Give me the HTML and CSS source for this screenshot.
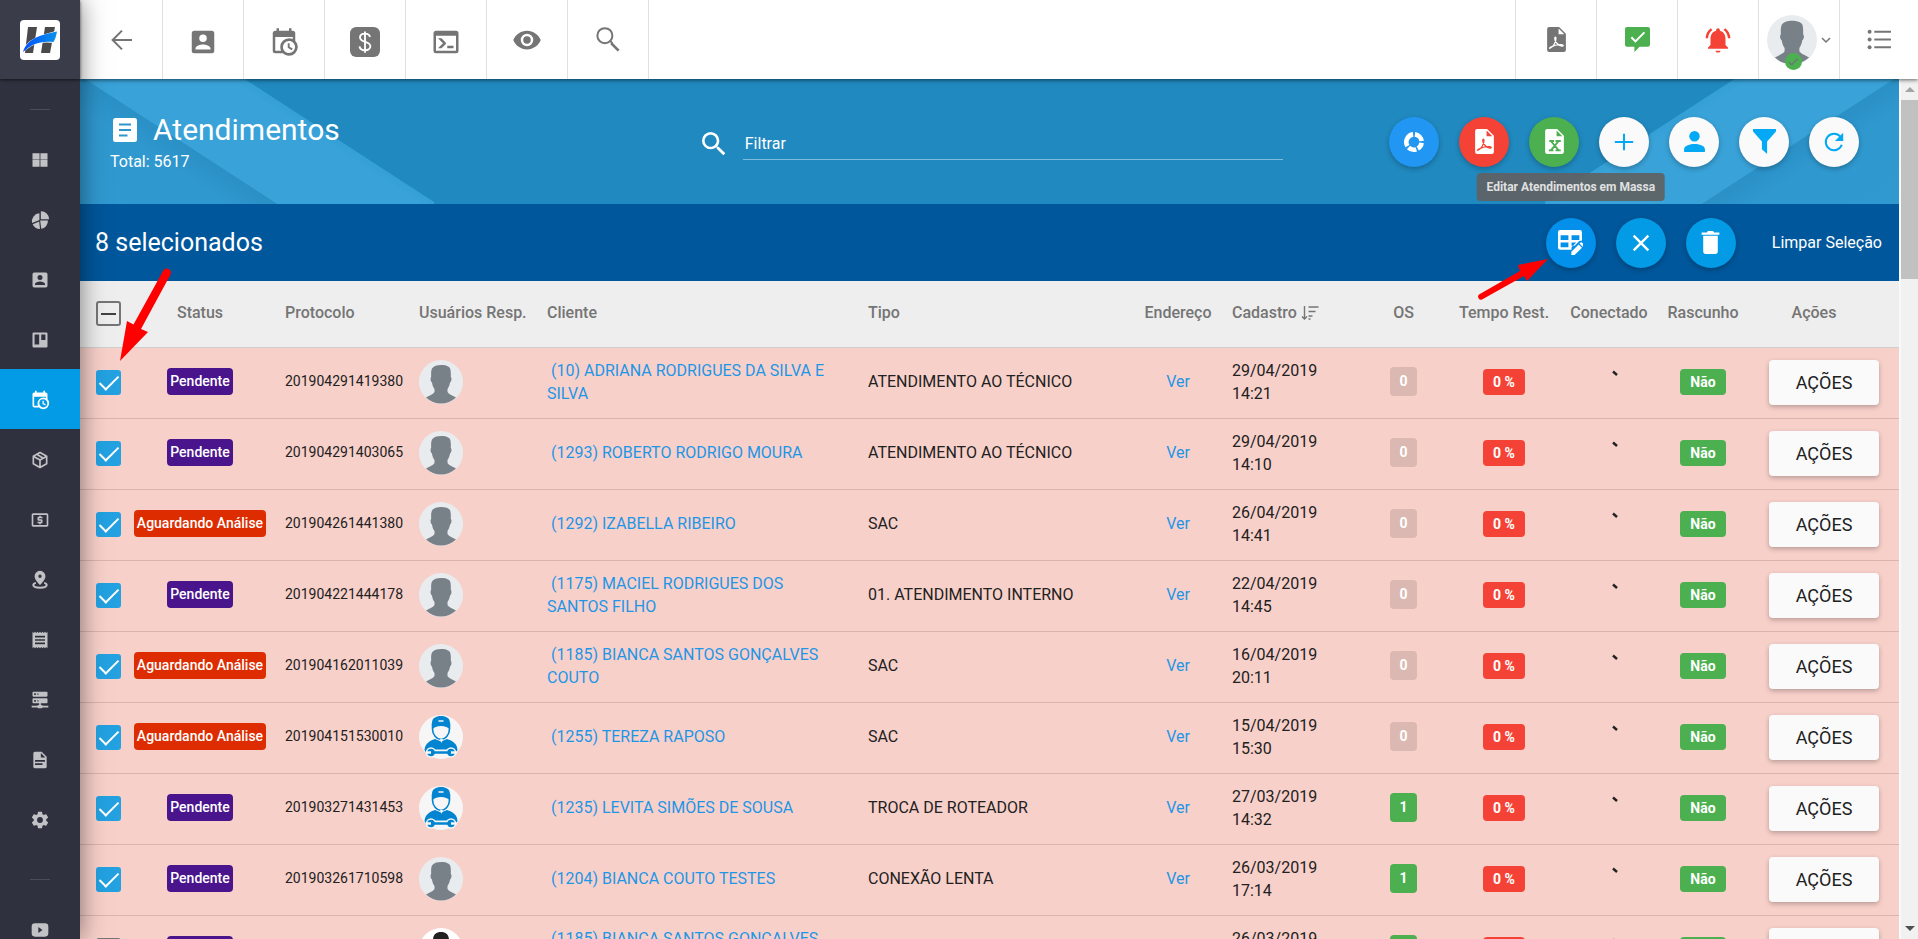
FILE: index.html
```html
<!DOCTYPE html>
<html lang="pt-BR">
<head>
    <meta charset="UTF-8">
    <meta name="viewport" content="width=device-width, initial-scale=1.0">
    <title>Atendimentos</title>
    <link rel="stylesheet" href="styles.css">
</head>
<body>
    <!-- Icon sprite -->
    <svg class="sprite" aria-hidden="true">
        <symbol id="i-arrow-left" viewBox="0 0 24 24"><path d="M20 12H4.800M12 4.500 4.500 12l7.500 7.500" fill="none" stroke="currentColor" stroke-width="1.600"/></symbol>
        <symbol id="i-account-box" viewBox="0 0 24 24"><path d="M3 5v14a2 2 0 0 0 2 2h14a2 2 0 0 0 2-2V5a2 2 0 0 0-2-2H5a2 2 0 0 0-2 2m12 4a3 3 0 0 1-3 3 3 3 0 0 1-3-3 3 3 0 0 1 3-3 3 3 0 0 1 3 3m-9 8c0-2 4-3.100 6-3.100s6 1.100 6 3.100v1H6v-1z"/></symbol>
        <symbol id="i-calendar-clock" viewBox="0 0 24 24"><path d="M15 13h1.500v2.820l2.440 1.410-.75 1.300L15 16.690V13m4-5H5v11h4.670c-.43-.91-.67-1.930-.67-3a7 7 0 0 1 7-7c1.070 0 2.090.24 3 .67V8M5 21a2 2 0 0 1-2-2V5c0-1.110.89-2 2-2h1V1h2v2h8V1h2v2h1a2 2 0 0 1 2 2v6.100c1.240 1.260 2 2.990 2 4.900a7 7 0 0 1-7 7c-1.910 0-3.640-.76-4.900-2H5m11-9.850A4.850 4.850 0 0 0 11.150 16c0 2.680 2.170 4.850 4.850 4.850A4.850 4.850 0 0 0 20.850 16c0-2.680-2.170-4.850-4.850-4.850z"/></symbol>
        <symbol id="i-dollar-box" viewBox="0 0 24 24"><rect width="24" height="24" rx="5"/><path d="M16 8c-.4-1.800-2-2.700-4-2.700-2.300 0-4 1.200-4 3.100 0 4.400 8.300 2.600 8.300 7 0 2-1.900 3.200-4.200 3.200-2.400 0-4.200-1.100-4.500-3.100M12 3.500v17" fill="none" stroke="#fff" stroke-width="1.500"/></symbol>
        <symbol id="i-console" viewBox="0 0 24 24"><path d="M20 19V7H4v12h16m0-16a2 2 0 0 1 2 2v14a2 2 0 0 1-2 2H4a2 2 0 0 1-2-2V5c0-1.110.9-2 2-2h16m-7 14v-2h5v2h-5m-3.420-4L5.570 9H8.400l3.300 3.300c.39.39.39 1.030 0 1.420L8.420 17H5.590l3.990-4z"/></symbol>
        <symbol id="i-eye" viewBox="0 0 24 24"><path d="M12 9a3 3 0 0 0-3 3 3 3 0 0 0 3 3 3 3 0 0 0 3-3 3 3 0 0 0-3-3m0 8a5 5 0 0 1-5-5 5 5 0 0 1 5-5 5 5 0 0 1 5 5 5 5 0 0 1-5 5m0-12.500C7 4.500 2.730 7.610 1 12c1.730 4.390 6 7.500 11 7.500s9.270-3.110 11-7.500c-1.730-4.390-6-7.500-11-7.500z"/></symbol>
        <symbol id="i-search-thin" viewBox="0 0 24 24"><path d="M14.500 14.500l6 6" fill="none" stroke="currentColor" stroke-width="2.200"/><circle cx="9.500" cy="8.500" r="6" fill="none" stroke="currentColor" stroke-width="1.600"/><path d="M13.500 12.500l2 2" stroke="currentColor" stroke-width="1.600"/></symbol>
        <symbol id="i-search" viewBox="0 0 24 24"><path d="M9.500 3A6.500 6.500 0 0 1 16 9.500c0 1.610-.59 3.090-1.560 4.230l.27.27h.79l5 5-1.500 1.500-5-5v-.79l-.27-.27A6.516 6.516 0 0 1 9.500 16 6.500 6.500 0 0 1 3 9.500 6.500 6.500 0 0 1 9.500 3m0 2C7 5 5 7 5 9.500S7 14 9.500 14 14 12 14 9.500 12 5 9.500 5z"/></symbol>
        <symbol id="i-pdf" viewBox="0 0 24 24"><path fill-rule="evenodd" d="M5 0h9.500L21 6.500V22a2 2 0 0 1-2 2H5a2 2 0 0 1-2-2V2a2 2 0 0 1 2-2M14 1.500V7h5.500z"/><path d="M5.500 20.500c3.500-1 6-6.500 6-9.500 0-1.800-1.200-1.800-1.200 0 0 3.500 3.700 6.800 7 7.300 1.700.2 1.500-1.300-.3-1.400-3.500-.2-7.500.6-10.500 2.400-1 .7-1.500 1.200-1 1.200z" fill="none" stroke="var(--cut, #fff)" stroke-width="1.200"/></symbol>
        <symbol id="i-excel" viewBox="0 0 24 24"><path fill-rule="evenodd" d="M5 0h9.500L21 6.500V22a2 2 0 0 1-2 2H5a2 2 0 0 1-2-2V2a2 2 0 0 1 2-2M14 1.500V7h5.500z"/><path d="M7 11.500h4.500M13 11.500h5M6.500 20.500h4.500M13 20.500h5M8.500 11.500l7.500 9M16 11.500l-7.500 9" fill="none" stroke="var(--cut)" stroke-width="1.800"/></symbol>
        <symbol id="i-msg-check" viewBox="0 0 24 24"><path fill-rule="evenodd" d="M2 0h20a2 2 0 0 1 2 2v15a2 2 0 0 1-2 2h-8l-5 5v-5H2a2 2 0 0 1-2-2V2a2 2 0 0 1 2-2M19.300 5.800l-1.300-1.300-8 8L6.800 9.200 5.400 10.600 10 15z"/></symbol>
        <symbol id="i-bell" viewBox="0 0 24 24"><path d="M7.580 4.080L6.150 2.650C3.750 4.480 2.170 7.300 2.030 10.500h2c.15-2.650 1.510-4.970 3.550-6.420zm12.390 6.420h2c-.15-3.200-1.730-6.020-4.120-7.850l-1.420 1.430c2.020 1.450 3.390 3.770 3.540 6.420zM18 11c0-3.070-1.640-5.640-4.500-6.320V4c0-.83-.67-1.500-1.500-1.500s-1.500.67-1.500 1.500v.68C7.630 5.360 6 7.920 6 11v5l-2 2v1h16v-1l-2-2v-5zM10 20.500c0 1.100.9 1.500 2 1.500s2-.4 2-1.500z"/></symbol>
        <symbol id="i-list" viewBox="0 0 24 24"><path d="M7 4.500h16M7 12h16M7 19.500h16" stroke="currentColor" stroke-width="2"/><circle cx="2.500" cy="4.500" r="1.900"/><circle cx="2.500" cy="12" r="1.900"/><circle cx="2.500" cy="19.500" r="1.900"/></symbol>
        <symbol id="i-chevron" viewBox="0 0 10 10"><path d="M1 3l4 4 4-4" fill="none" stroke="currentColor" stroke-width="1.500"/></symbol>

        <symbol id="i-dashboard" viewBox="0 0 24 24"><path d="M3 4h8.500v7H3zM12.500 4H21v7h-8.500zM3 12h8.500v8H3zM12.500 12H21v8h-8.500z"/><path d="M3 11h8.500v1H3zM12.500 11H21v1h-8.500z" opacity=".6"/></symbol>
        <symbol id="i-pie" viewBox="0 0 24 24"><path d="M13 1.500A9.500 9.500 0 0 1 23 11H13zM11.300 4v8L2.500 15.500A9.500 9.500 0 0 1 11.300 4zM3.200 17l7.800-3.300 1 9A9.500 9.500 0 0 1 3.200 17zM13.500 22.500l-1.300-10H21.500a9.500 9.500 0 0 1-8 10z"/></symbol>
        <symbol id="i-board" viewBox="0 0 24 24"><path fill-rule="evenodd" d="M4.500 3h15A1.500 1.500 0 0 1 21 4.500v15a1.500 1.500 0 0 1-1.500 1.500h-15A1.500 1.500 0 0 1 3 19.500v-15A1.500 1.500 0 0 1 4.500 3M5.500 5.500v12H11v-12zM13.500 5.500V12h5V5.500z"/></symbol>
        <symbol id="i-package" viewBox="0 0 24 24"><path d="M21 16.500c0 .38-.21.71-.53.88l-7.900 4.440c-.16.12-.36.18-.57.18s-.41-.06-.57-.18l-7.900-4.440A.991.991 0 0 1 3 16.500v-9c0-.38.21-.71.53-.88l7.900-4.440c.16-.12.36-.18.57-.18s.41.06.57.18l7.900 4.440c.32.17.53.5.53.88v9M12 4.150l-1.890 1.070L16 8.610 17.960 7.500 12 4.150M6.040 7.500L12 10.850l1.960-1.100-5.880-3.400L6.040 7.500M5 15.910l6 3.380v-6.710L5 9.210v6.700m14 0v-6.700l-6 3.370v6.710l6-3.380z"/></symbol>
        <symbol id="i-cash" viewBox="0 0 24 24"><path d="M11 17h2v-1h1c.55 0 1-.45 1-1v-3c0-.55-.45-1-1-1h-3v-1h4V8h-2V7h-2v1h-1c-.55 0-1 .45-1 1v3c0 .55.45 1 1 1h3v1H9v2h2v1zm9-13H4c-1.110 0-2 .89-2 2v12c0 1.110.89 2 2 2h16c1.110 0 2-.89 2-2V6c0-1.110-.89-2-2-2zm0 14H4V6h16v12z"/></symbol>
        <symbol id="i-pin" viewBox="0 0 24 24"><path d="M12 1a6.500 6.500 0 0 1 6.500 6.500C18.500 12 12 18 12 18S5.500 12 5.500 7.500A6.500 6.500 0 0 1 12 1m0 4.500a2 2 0 1 0 0 4 2 2 0 0 0 0-4z"/><path d="M7 15.500c-2 .6-3 1.500-3 2.500 0 2 3.600 3.200 8 3.200s8-1.200 8-3.200c0-1-1-1.900-3-2.500" fill="none" stroke="currentColor" stroke-width="2.400"/></symbol>
        <symbol id="i-receipt" viewBox="0 0 24 24"><path d="M18 17H6v-2h12v2zm0-4H6v-2h12v2zm0-4H6V7h12v2zM3 22l1.500-1.500L6 22l1.500-1.500L9 22l1.500-1.500L12 22l1.500-1.500L15 22l1.500-1.500L18 22l1.500-1.500L21 22V2l-1.500 1.500L18 2l-1.500 1.500L15 2l-1.500 1.500L12 2l-1.500 1.500L9 2 7.500 3.500 6 2 4.500 3.500 3 2v20z"/></symbol>
        <symbol id="i-server" viewBox="0 0 24 24"><path d="M13 18h1a1 1 0 0 1 1 1h7v2h-7a1 1 0 0 1-1 1h-4a1 1 0 0 1-1-1H2v-2h7a1 1 0 0 1 1-1h1v-2H4a1 1 0 0 1-1-1v-4a1 1 0 0 1 1-1h16a1 1 0 0 1 1 1v4a1 1 0 0 1-1 1h-7v2M4 2h16a1 1 0 0 1 1 1v4a1 1 0 0 1-1 1H4a1 1 0 0 1-1-1V3a1 1 0 0 1 1-1m5 4h1V4H9v2m0 8h1v-2H9v2M5 4v2h2V4H5m0 8v2h2v-2H5z"/></symbol>
        <symbol id="i-file" viewBox="0 0 24 24"><path d="M13 9h5.500L13 3.500V9M6 2h8l6 6v12a2 2 0 0 1-2 2H6a2 2 0 0 1-2-2V4c0-1.110.89-2 2-2m9 16v-2H6v2h9m3-4v-2H6v2h12z"/></symbol>
        <symbol id="i-gear" viewBox="0 0 24 24"><path d="M12 15.500A3.500 3.500 0 0 1 8.500 12 3.500 3.500 0 0 1 12 8.500a3.500 3.500 0 0 1 3.500 3.500 3.500 3.500 0 0 1-3.500 3.500m7.430-2.530c.04-.32.07-.64.07-.97s-.03-.66-.07-1l2.110-1.630c.19-.15.24-.42.12-.64l-2-3.460c-.12-.22-.39-.31-.61-.22l-2.490 1c-.52-.39-1.060-.73-1.690-.98l-.37-2.650A.506.506 0 0 0 14 2h-4c-.25 0-.46.18-.5.42l-.37 2.650c-.63.25-1.170.59-1.690.98l-2.490-1c-.22-.09-.49 0-.61.22l-2 3.460c-.13.22-.07.49.12.64L4.570 11c-.04.34-.07.67-.07 1s.03.65.07.97l-2.110 1.660c-.19.15-.25.42-.12.64l2 3.460c.12.22.39.3.61.22l2.490-1.010c.52.4 1.060.74 1.690.99l.37 2.650c.04.24.25.42.5.42h4c.25 0 .46-.18.5-.42l.37-2.650c.63-.26 1.170-.59 1.690-.99l2.490 1.010c.22.08.49 0 .61-.22l2-3.460c.12-.22.07-.49-.12-.64l-2.110-1.660z"/></symbol>
        <symbol id="i-video" viewBox="0 0 24 24"><path fill-rule="evenodd" d="M6 4h12a4 4 0 0 1 4 4v8a4 4 0 0 1-4 4H6a4 4 0 0 1-4-4V8a4 4 0 0 1 4-4M10 8.500v7l5-3.500z"/></symbol>

        <symbol id="i-article" viewBox="0 0 24 24"><path fill-rule="evenodd" d="M2.500 0h19A2.500 2.500 0 0 1 24 2.500v19a2.500 2.500 0 0 1-2.500 2.500h-19A2.500 2.500 0 0 1 0 21.500v-19A2.500 2.500 0 0 1 2.500 0M6 5.500v2h12v-2zM6 11v2h12v-2zM6 16.500v2h8.500v-2z"/></symbol>
        <symbol id="i-donut" viewBox="0 0 24 24"><g fill="none" stroke="currentColor" stroke-width="5"><path d="M13 3.700a8.400 8.400 0 0 1 7.300 7.300"/><path d="M20.300 13a8.400 8.400 0 0 1-4.200 6.200"/><path d="M14.500 20a8.400 8.400 0 0 1-8.500-2"/><path d="M4.900 16.500A8.400 8.400 0 0 1 11 3.700"/></g></symbol>
        <symbol id="i-plus" viewBox="0 0 24 24"><path d="M12 3v18M2 12h20" stroke="currentColor" stroke-width="2.200"/></symbol>
        <symbol id="i-person" viewBox="0 0 24 24"><circle cx="12" cy="7" r="5"/><path d="M2 22v-2.500C2 16 8 14.500 12 14.500s10 1.500 10 5V22z"/></symbol>
        <symbol id="i-funnel" viewBox="0 0 24 24"><path d="M1 0h22v2.500L14.500 12v12L9.500 19.500V12L1 2.500z"/></symbol>
        <symbol id="i-refresh" viewBox="0 0 24 24"><path d="M20.500 15A9 9 0 1 1 19 6.200" fill="none" stroke="currentColor" stroke-width="2.200"/><path d="M22 2v9h-9z"/></symbol>
        <symbol id="i-table-edit" viewBox="0 0 24 24"><path fill-rule="evenodd" d="M2 0h19a2 2 0 0 1 2 2v8l-2.500.5L16 15h-3v4H2a2 2 0 0 1-2-2V2a2 2 0 0 1 2-2M2.500 5v4.500H10V5zM13 5v4.500h7.500V5zM2.500 12v4.500H10V12zM13 12v4.500l4.500-4.500z"/><path d="M12.800 24v-3.200l7-7 3.200 3.200-7 7zM20.600 13l1-1q.7-.6 1.400 0l1.800 1.800-1.200 2.200z"/></symbol>
        <symbol id="i-close" viewBox="0 0 24 24"><path d="M4 4l16 16M20 4L4 20" stroke="currentColor" stroke-width="2.600"/></symbol>
        <symbol id="i-trash" viewBox="0 0 24 24"><path d="M20.500 2.500h-5L14.500 1h-5l-1 1.500h-5v2h17M5 20.500A2.500 2.500 0 0 0 7.500 23h9a2.500 2.500 0 0 0 2.500-2.500V5.500H5z"/></symbol>
        <symbol id="i-sort" viewBox="0 0 18 16"><path d="M3.500 1v13M1 11.500l2.500 2.500L6 11.500M7.500 2h10M7.500 6.500h7M7.500 11h4M7.500 14h2" fill="none" stroke="currentColor" stroke-width="1.400"/></symbol>
        <symbol id="i-mark" viewBox="0 0 24 24"><path d="M16 1.500l4 3.500" stroke="currentColor" stroke-width="2.400"/></symbol>

        <symbol id="av-user" viewBox="0 0 44 44"><circle cx="22" cy="22" r="22" fill="#e9ecef"/><path d="M22 5c6 0 9.500 2 9.500 5 .5 3 .3 5 .3 7 1.200 1 .7 4.500-.8 5.500-.3 3-1.500 5-2.500 6.500v3c1.500 2.500 5.500 3.500 8.500 5.500a22 22 0 0 1-30 0c3-2 7-3 8.500-5.500v-3c-1.200-1.500-2.200-3.500-2.500-6.500-1.500-1-2-4.500-.8-5.500-.1-3-.3-6 .8-8.500C14.500 6 18 5 22 5z" fill="#788088"/></symbol>
        <symbol id="av-tech" viewBox="0 0 44 44"><circle cx="22" cy="22" r="22" fill="#f6f6f6"/><path d="M5.500 35c1-7 5-9 10.500-11l6 2.500 6-2.500c5.500 2 10 4 10.500 11l-3 5h-27z" fill="#0284d0"/><path d="M13.500 14c0 6 4.500 10.500 8.500 10.500s8.500-4.500 8.500-10.500V9h-17z" fill="#f6f6f6" stroke="#0284d0" stroke-width="1.600"/><path d="M13 15V8c0-5 4-7 9-7s9 2 9 7v7c-2-3-5-4-9-4s-7 1-9 4z" fill="#0284d0"/><path d="M19.500 6h5" stroke="#f6f6f6" stroke-width="1.500"/><path d="M21 24l1.500 4 1.500-4z" fill="#f6f6f6"/><path d="M14 37.500h16" stroke="#f6f6f6" stroke-width="6"/><circle cx="12" cy="37.500" r="4.500" fill="#0284d0" stroke="#f6f6f6" stroke-width="1.500"/><circle cx="32" cy="37.500" r="4.500" fill="#0284d0" stroke="#f6f6f6" stroke-width="1.500"/><path d="M14 37.500h16" stroke="#0284d0" stroke-width="2.500"/><path d="M7 37.500h5M32 37.500h6" stroke="#f6f6f6" stroke-width="2.500"/></symbol>
        <symbol id="av-dark" viewBox="0 0 44 44"><circle cx="22" cy="22" r="22" fill="#fff"/><path d="M22 4c5 0 8 3 8 8 0 8-3 12-8 12s-8-4-8-12c0-5 3-8 8-8zM6 40c2-10 8-12 16-12s14 2 16 12z"/></symbol>
    </svg>

    <aside class="sidebar">
        <a class="logo" href="#" aria-label="Início">
            <svg viewBox="0 0 40 40">
                <rect width="40" height="40" rx="4" fill="#fff"/>
                <path d="M8 7h9l-4 26H5zM25 7h10l-5 26h-9z" fill="#4a4a4c"/>
                <path d="M2 33c4-13 14-17 36-22.500-1 6-2 9-4 12.500-13-2-22 1-32 10z" fill="#fff"/>
                <path d="M3 32C7 20 17 15.500 37 11.500c-.7 4-1.500 7-3.500 10.500C20 20.500 12 24 3 32z" fill="url(#swoosh)"/>
                <defs><linearGradient id="swoosh"><stop offset="0" stop-color="#0050ff"/><stop offset="1" stop-color="#0a92e8"/></linearGradient></defs>
            </svg>
        </a>
        <nav class="side-nav" aria-label="Menu principal">
            <hr>
            <a href="#" aria-label="Painel"><svg><use href="#i-dashboard"/></svg></a>
            <a href="#" aria-label="Relatórios"><svg><use href="#i-pie"/></svg></a>
            <a href="#" aria-label="Clientes"><svg><use href="#i-account-box"/></svg></a>
            <a href="#" aria-label="Quadros"><svg><use href="#i-board"/></svg></a>
            <a href="#" class="active" aria-label="Atendimentos"><svg><use href="#i-calendar-clock"/></svg></a>
            <a href="#" aria-label="Estoque"><svg><use href="#i-package"/></svg></a>
            <a href="#" aria-label="Financeiro"><svg><use href="#i-cash"/></svg></a>
            <a href="#" aria-label="Mapa"><svg><use href="#i-pin"/></svg></a>
            <a href="#" aria-label="Notas"><svg><use href="#i-receipt"/></svg></a>
            <a href="#" aria-label="Rede"><svg><use href="#i-server"/></svg></a>
            <a href="#" aria-label="Documentos"><svg><use href="#i-file"/></svg></a>
            <a href="#" aria-label="Configurações"><svg><use href="#i-gear"/></svg></a>
            <hr>
            <a href="#" aria-label="Vídeos"><svg><use href="#i-video"/></svg></a>
        </nav>
    </aside>

    <div class="page">
        <header class="topbar">
            <div class="top-group left">
                <button aria-label="Voltar"><svg><use href="#i-arrow-left"/></svg></button>
                <button class="low" aria-label="Clientes"><svg><use href="#i-account-box"/></svg></button>
                <button class="low" aria-label="Agenda"><svg><use href="#i-calendar-clock"/></svg></button>
                <button class="low" aria-label="Financeiro"><svg><use href="#i-dollar-box"/></svg></button>
                <button class="low" aria-label="Terminal"><svg><use href="#i-console"/></svg></button>
                <button aria-label="Visualizar"><svg><use href="#i-eye"/></svg></button>
                <button aria-label="Pesquisar"><svg><use href="#i-search-thin"/></svg></button>
            </div>
            <div class="top-group right">
                <button aria-label="PDF"><svg class="small"><use href="#i-pdf"/></svg></button>
                <button class="green" aria-label="Mensagens"><svg class="small"><use href="#i-msg-check"/></svg></button>
                <button class="red" aria-label="Notificações"><svg><use href="#i-bell"/></svg></button>
                <button class="profile" aria-label="Perfil">
                    <span class="profile-pic">
                        <svg class="avatar-lg"><use href="#av-user"/></svg>
                        <svg class="online" viewBox="0 0 18 18"><circle cx="9" cy="9" r="9" fill="#4caf50"/><path d="M4 9.500l3 3L13.500 6" fill="none" stroke="#6b7a72" stroke-width="1.600"/></svg>
                    </span>
                    <svg class="chevron"><use href="#i-chevron"/></svg>
                </button>
                <button aria-label="Menu"><svg class="small"><use href="#i-list"/></svg></button>
            </div>
        </header>

        <div class="content">
            <main>
                <section class="page-head">
                    <div class="title">
                        <h1><svg><use href="#i-article"/></svg>Atendimentos</h1>
                        <p>Total: 5617</p>
                    </div>
                    <label class="search">
                        <svg><use href="#i-search"/></svg>
                        <input type="text" placeholder="Filtrar" aria-label="Filtrar">
                    </label>
                    <div class="actions">
                        <button class="fab blue" aria-label="Gráficos"><svg class="s-md"><use href="#i-donut"/></svg></button>
                        <button class="fab red" aria-label="Exportar PDF"><svg><use href="#i-pdf"/></svg></button>
                        <button class="fab green" aria-label="Exportar planilha"><svg><use href="#i-excel"/></svg></button>
                        <button class="fab" aria-label="Adicionar"><svg class="s-md"><use href="#i-plus"/></svg></button>
                        <button class="fab" aria-label="Usuário"><svg><use href="#i-person"/></svg></button>
                        <button class="fab" aria-label="Filtros"><svg><use href="#i-funnel"/></svg></button>
                        <button class="fab" aria-label="Atualizar"><svg class="s-md"><use href="#i-refresh"/></svg></button>
                    </div>
                </section>

                <section class="selection">
                    <h2>8 selecionados</h2>
                    <div class="actions">
                        <button class="fab edit" aria-labelledby="tip-edit">
                            <svg><use href="#i-table-edit"/></svg>
                            <span class="tooltip" id="tip-edit">Editar Atendimentos em Massa</span>
                        </button>
                        <button class="fab sky" aria-label="Fechar"><svg class="s-md"><use href="#i-close"/></svg></button>
                        <button class="fab sky" aria-label="Excluir"><svg><use href="#i-trash"/></svg></button>
                        <button class="clear">Limpar Seleção</button>
                    </div>
                    <svg class="pointer pointer-left" viewBox="0 0 70 100"><path d="M53 4a4 4 0 0 1 7.500 3.500L31 62l7 3L10 94l7-40 6.500 3.500z"/></svg>
                    <svg class="pointer pointer-right" viewBox="0 0 80 50"><path d="M2 43.500L43 20l-2-6L71 8 50 30l-3-5L5 48.500a3 3 0 0 1-3-5z"/></svg>
                </section>

                <table>
                    <colgroup>
                        <col class="c-check"><col class="c-status"><col class="c-protocol"><col class="c-users"><col class="c-client"><col class="c-type"><col class="c-small"><col class="c-date"><col class="c-os"><col class="c-time"><col class="c-conn"><col class="c-small"><col class="c-actions">
                    </colgroup>
                    <thead>
                        <tr>
                            <th class="check"><input type="checkbox" class="partial" aria-label="Selecionar todos"></th>
                            <th class="center">Status</th>
                            <th>Protocolo</th>
                            <th>Usuários Resp.</th>
                            <th>Cliente</th>
                            <th>Tipo</th>
                            <th class="center">Endereço</th>
                            <th>Cadastro <svg class="sort"><use href="#i-sort"/></svg></th>
                            <th class="center">OS</th>
                            <th class="center">Tempo Rest.</th>
                            <th class="center">Conectado</th>
                            <th class="center">Rascunho</th>
                            <th class="row-actions">Ações</th>
                        </tr>
                    </thead>
                    <tbody>
                        <tr>
                            <td class="check"><input type="checkbox" checked aria-label="Selecionar 201904291419380"></td>
                            <td class="center"><span class="badge pending">Pendente</span></td>
                            <td class="protocol">201904291419380</td>
                            <td><svg class="avatar"><use href="#av-user"/></svg></td>
                            <td><a href="#">&nbsp;(10) ADRIANA RODRIGUES DA SILVA E SILVA</a></td>
                            <td>ATENDIMENTO AO TÉCNICO</td>
                            <td class="center"><a href="#">Ver</a></td>
                            <td>29/04/2019 14:21</td>
                            <td class="center"><span class="count">0</span></td>
                            <td class="center"><span class="tag red">0 %</span></td>
                            <td class="center"><svg class="mark"><use href="#i-mark"/></svg></td>
                            <td class="center"><span class="tag green">Não</span></td>
                            <td class="row-actions"><button>AÇÕES</button></td>
                        </tr>
                        <tr>
                            <td class="check"><input type="checkbox" checked aria-label="Selecionar 201904291403065"></td>
                            <td class="center"><span class="badge pending">Pendente</span></td>
                            <td class="protocol">201904291403065</td>
                            <td><svg class="avatar"><use href="#av-user"/></svg></td>
                            <td><a href="#">&nbsp;(1293) ROBERTO RODRIGO MOURA</a></td>
                            <td>ATENDIMENTO AO TÉCNICO</td>
                            <td class="center"><a href="#">Ver</a></td>
                            <td>29/04/2019 14:10</td>
                            <td class="center"><span class="count">0</span></td>
                            <td class="center"><span class="tag red">0 %</span></td>
                            <td class="center"><svg class="mark"><use href="#i-mark"/></svg></td>
                            <td class="center"><span class="tag green">Não</span></td>
                            <td class="row-actions"><button>AÇÕES</button></td>
                        </tr>
                        <tr>
                            <td class="check"><input type="checkbox" checked aria-label="Selecionar 201904261441380"></td>
                            <td class="center"><span class="badge waiting">Aguardando Análise</span></td>
                            <td class="protocol">201904261441380</td>
                            <td><svg class="avatar"><use href="#av-user"/></svg></td>
                            <td><a href="#">&nbsp;(1292) IZABELLA RIBEIRO</a></td>
                            <td>SAC</td>
                            <td class="center"><a href="#">Ver</a></td>
                            <td>26/04/2019 14:41</td>
                            <td class="center"><span class="count">0</span></td>
                            <td class="center"><span class="tag red">0 %</span></td>
                            <td class="center"><svg class="mark"><use href="#i-mark"/></svg></td>
                            <td class="center"><span class="tag green">Não</span></td>
                            <td class="row-actions"><button>AÇÕES</button></td>
                        </tr>
                        <tr>
                            <td class="check"><input type="checkbox" checked aria-label="Selecionar 201904221444178"></td>
                            <td class="center"><span class="badge pending">Pendente</span></td>
                            <td class="protocol">201904221444178</td>
                            <td><svg class="avatar"><use href="#av-user"/></svg></td>
                            <td><a href="#">&nbsp;(1175) MACIEL RODRIGUES DOS SANTOS FILHO</a></td>
                            <td>01. ATENDIMENTO INTERNO</td>
                            <td class="center"><a href="#">Ver</a></td>
                            <td>22/04/2019 14:45</td>
                            <td class="center"><span class="count">0</span></td>
                            <td class="center"><span class="tag red">0 %</span></td>
                            <td class="center"><svg class="mark"><use href="#i-mark"/></svg></td>
                            <td class="center"><span class="tag green">Não</span></td>
                            <td class="row-actions"><button>AÇÕES</button></td>
                        </tr>
                        <tr>
                            <td class="check"><input type="checkbox" checked aria-label="Selecionar 201904162011039"></td>
                            <td class="center"><span class="badge waiting">Aguardando Análise</span></td>
                            <td class="protocol">201904162011039</td>
                            <td><svg class="avatar"><use href="#av-user"/></svg></td>
                            <td><a href="#">&nbsp;(1185) BIANCA SANTOS GONÇALVES COUTO</a></td>
                            <td>SAC</td>
                            <td class="center"><a href="#">Ver</a></td>
                            <td>16/04/2019 20:11</td>
                            <td class="center"><span class="count">0</span></td>
                            <td class="center"><span class="tag red">0 %</span></td>
                            <td class="center"><svg class="mark"><use href="#i-mark"/></svg></td>
                            <td class="center"><span class="tag green">Não</span></td>
                            <td class="row-actions"><button>AÇÕES</button></td>
                        </tr>
                        <tr>
                            <td class="check"><input type="checkbox" checked aria-label="Selecionar 201904151530010"></td>
                            <td class="center"><span class="badge waiting">Aguardando Análise</span></td>
                            <td class="protocol">201904151530010</td>
                            <td><svg class="avatar"><use href="#av-tech"/></svg></td>
                            <td><a href="#">&nbsp;(1255) TEREZA RAPOSO</a></td>
                            <td>SAC</td>
                            <td class="center"><a href="#">Ver</a></td>
                            <td>15/04/2019 15:30</td>
                            <td class="center"><span class="count">0</span></td>
                            <td class="center"><span class="tag red">0 %</span></td>
                            <td class="center"><svg class="mark"><use href="#i-mark"/></svg></td>
                            <td class="center"><span class="tag green">Não</span></td>
                            <td class="row-actions"><button>AÇÕES</button></td>
                        </tr>
                        <tr>
                            <td class="check"><input type="checkbox" checked aria-label="Selecionar 201903271431453"></td>
                            <td class="center"><span class="badge pending">Pendente</span></td>
                            <td class="protocol">201903271431453</td>
                            <td><svg class="avatar"><use href="#av-tech"/></svg></td>
                            <td><a href="#">&nbsp;(1235) LEVITA SIMÕES DE SOUSA</a></td>
                            <td>TROCA DE ROTEADOR</td>
                            <td class="center"><a href="#">Ver</a></td>
                            <td>27/03/2019 14:32</td>
                            <td class="center"><span class="count green">1</span></td>
                            <td class="center"><span class="tag red">0 %</span></td>
                            <td class="center"><svg class="mark"><use href="#i-mark"/></svg></td>
                            <td class="center"><span class="tag green">Não</span></td>
                            <td class="row-actions"><button>AÇÕES</button></td>
                        </tr>
                        <tr>
                            <td class="check"><input type="checkbox" checked aria-label="Selecionar 201903261710598"></td>
                            <td class="center"><span class="badge pending">Pendente</span></td>
                            <td class="protocol">201903261710598</td>
                            <td><svg class="avatar"><use href="#av-user"/></svg></td>
                            <td><a href="#">&nbsp;(1204) BIANCA COUTO TESTES</a></td>
                            <td>CONEXÃO LENTA</td>
                            <td class="center"><a href="#">Ver</a></td>
                            <td>26/03/2019 17:14</td>
                            <td class="center"><span class="count green">1</span></td>
                            <td class="center"><span class="tag red">0 %</span></td>
                            <td class="center"><svg class="mark"><use href="#i-mark"/></svg></td>
                            <td class="center"><span class="tag green">Não</span></td>
                            <td class="row-actions"><button>AÇÕES</button></td>
                        </tr>
                        <tr>
                            <td class="check"><input type="checkbox" aria-label="Selecionar atendimento"></td>
                            <td class="center"><span class="badge pending">Pendente</span></td>
                            <td class="protocol"></td>
                            <td><svg class="avatar"><use href="#av-dark"/></svg></td>
                            <td><a href="#">&nbsp;(1185) BIANCA SANTOS GONÇALVES COUTO</a></td>
                            <td></td>
                            <td></td>
                            <td>26/03/2019 16:00</td>
                            <td class="center"><span class="count green">1</span></td>
                            <td class="center"><span class="tag red">0 %</span></td>
                            <td class="center"><svg class="mark"><use href="#i-mark"/></svg></td>
                            <td class="center"><span class="tag green">Não</span></td>
                            <td class="row-actions"><button>AÇÕES</button></td>
                        </tr>
                    </tbody>
                </table>
            </main>
            <div class="scrollbar" aria-hidden="true">
                <span class="arrow up"></span>
                <span class="thumb"></span>
                <span class="arrow down"></span>
            </div>
        </div>
    </div>
</body>
</html>
```
FILE: styles.css
```css
* {
    box-sizing: border-box;
}

body {
    margin: 0;
    height: 100vh;
    overflow: hidden;
    display: flex;
    font-family: Roboto, "Liberation Sans", sans-serif;
    font-size: 16px;
    line-height: 23px;
    color: #212121;
    background-color: #fff;
}

button {
    font-family: inherit;
    border: none;
    padding: 0;
    background: none;
    cursor: pointer;
}

svg {
    fill: currentColor;
}

a {
    color: #1e96e6;
    text-decoration: none;
}

.sprite {
    position: absolute;
    width: 0;
    height: 0;
}

/* Sidebar */
.sidebar {
    flex: none;
    width: 80px;
    background-color: #2f323e;
    box-shadow: 0 0 24px rgba(0, 0, 0, 0.5);
    position: relative;
    z-index: 2;
}

.logo {
    display: flex;
    align-items: center;
    justify-content: center;
    height: 79px;
    background-color: #3a3d49;
    box-shadow: 0 1px 3px rgba(0, 0, 0, 0.6);
}

.logo svg {
    width: 40px;
    height: 40px;
}

.side-nav hr {
    width: 20px;
    height: 1px;
    border: none;
    margin: 30px auto 19px;
    background-color: #4a4d58;
}

.side-nav a {
    display: flex;
    align-items: center;
    justify-content: center;
    height: 60px;
    padding-top: 2px;
    color: #c1c2c5;
}

.side-nav a.active {
    background-color: #039be5;
    color: #fff;
}

.side-nav svg {
    width: 20px;
    height: 20px;
}

/* Top bar */
.page {
    flex: 1;
    min-width: 0;
    display: flex;
    flex-direction: column;
}

.topbar {
    flex: none;
    display: flex;
    justify-content: space-between;
    height: 79px;
    background-color: #fff;
    box-shadow: 0 1px 4px rgba(0, 0, 0, 0.6);
    position: relative;
    z-index: 1;
}

.top-group {
    display: flex;
}

.top-group.left {
    padding-left: 2px;
}

.top-group > button {
    display: flex;
    align-items: center;
    justify-content: center;
    width: 81px;
    color: #757575;
    border-right: 1px solid #e0e0e0;
}

.top-group > button.low {
    padding-top: 4px;
}

.top-group.right > button {
    border-right: none;
    border-left: 1px solid #e0e0e0;
}

.top-group.right > button:last-child {
    width: 79px;
}

.top-group svg {
    width: 30px;
    height: 30px;
}

.top-group svg.small {
    width: 25px;
    height: 25px;
}

.top-group > button.green {
    color: #4caf50;
}

.top-group > button.red {
    color: #f44336;
}

.top-group > button.profile {
    gap: 4px;
}

.profile-pic {
    position: relative;
    display: flex;
}

.top-group svg.avatar-lg {
    width: 50px;
    height: 50px;
}

.top-group svg.online {
    position: absolute;
    left: 18px;
    bottom: -5px;
    width: 17px;
    height: 17px;
}

.top-group svg.chevron {
    width: 10px;
    height: 10px;
}

/* Content */
.content {
    flex: 1;
    min-height: 0;
    display: flex;
}

main {
    flex: 1;
    min-width: 0;
    overflow: hidden;
}

.page-head {
    display: grid;
    grid-template-columns: 102fr 585px 100fr;
    align-items: center;
    height: 125px;
    padding: 0 40px 0 30px;
    color: #fff;
    background:
        linear-gradient(33deg, #3099d0 0, #2f98cf 80px, #2a90c6 107px, #39a2d8 108px, #39a2d8 186px, #34a0d5 194px, rgba(32, 137, 191, 0) 195px) left / 354px 100% no-repeat,
        linear-gradient(-33deg, #3099d0 0, #2f98cf 80px, #2a90c6 107px, #39a2d8 108px, #39a2d8 186px, #34a0d5 194px, rgba(32, 137, 191, 0) 195px) right / 354px 100% no-repeat,
        #2089bf;
}

.title h1 {
    display: flex;
    align-items: center;
    gap: 16px;
    margin: 0;
    padding: 2px 0 0 3px;
    font-size: 30px;
    line-height: 36px;
    font-weight: 400;
}

.title h1 svg {
    width: 24px;
    height: 24px;
}

.title p {
    margin: 2px 0 0;
}

.search {
    display: flex;
    align-items: center;
    gap: 13px;
    padding-top: 4px;
}

.search svg {
    width: 32px;
    height: 32px;
}

.search input {
    flex: 1;
    height: 32px;
    padding: 0 2px;
    border: none;
    border-bottom: 1px solid #7dbbdd;
    outline: none;
    background: none;
    color: #fff;
    font: inherit;
}

.search input::placeholder {
    color: #fff;
}

.actions {
    display: flex;
    justify-content: flex-end;
    align-items: center;
    gap: 20px;
}

.fab {
    flex: none;
    display: flex;
    align-items: center;
    justify-content: center;
    width: 50px;
    height: 50px;
    border-radius: 50%;
    background-color: #fafafa;
    color: #03a9f4;
    box-shadow: 0 2px 5px rgba(0, 0, 0, 0.26);
    position: relative;
}

.fab svg {
    width: 25px;
    height: 25px;
}

.fab svg.s-md {
    width: 22px;
    height: 22px;
}

.fab.blue {
    background-color: #2196f3;
    color: #fff;
}

.fab.red {
    --cut: #f44336;
    background-color: #f44336;
    color: #fff;
}

.fab.green {
    --cut: #4caf50;
    background-color: #4caf50;
    color: #fff;
}

.fab.sky {
    background-color: #039be5;
    color: #fff;
}

.fab.edit {
    background-color: #0390ea;
    color: #fff;
}

/* Selection bar */
.selection {
    display: flex;
    align-items: center;
    justify-content: space-between;
    height: 77px;
    padding: 0 17px 0 15px;
    background-color: #01579b;
    color: #fff;
    position: relative;
}

.selection h2 {
    margin: 0;
    font-size: 25px;
    font-weight: 400;
}

.clear {
    margin-left: 16px;
    color: #fff;
    font-size: 16px;
}

.tooltip {
    position: absolute;
    bottom: 67px;
    left: 50%;
    transform: translateX(-50%);
    padding: 0 10px;
    border-radius: 4px;
    background-color: rgba(97, 97, 97, 0.9);
    color: #e0e0e0;
    font-size: 12px;
    line-height: 28px;
    font-weight: 700;
    white-space: nowrap;
}

.pointer {
    position: absolute;
    z-index: 1;
    fill: #f00;
    pointer-events: none;
}

.pointer-left {
    top: 63px;
    left: 30px;
    width: 70px;
    height: 100px;
}

.pointer-right {
    top: 47px;
    right: 342px;
    width: 80px;
    height: 50px;
}

/* Table */
table {
    width: 100%;
    table-layout: fixed;
    border-collapse: collapse;
}

.c-check { width: 45px; }
.c-status { width: 150px; }
.c-protocol { width: 134px; }
.c-users { width: 128px; }
.c-client { width: auto; }
.c-type { width: 276px; }
.c-small { width: 88px; }
.c-date { width: 136px; }
.c-os { width: 91px; }
.c-time { width: 110px; }
.c-conn { width: 100px; }
.c-actions { width: 152px; }

th {
    height: 66px;
    padding: 0 10px 2px;
    text-align: left;
    font-weight: 500;
    color: #757575;
    background-color: #eee;
    border-bottom: 1px solid #d0cecd;
    white-space: nowrap;
}

td {
    height: 71px;
    padding: 9px 10px 11px;
    background-color: #f8d0ca;
    border-bottom: 1px solid #dbb4ae;
}

th.center,
td.center {
    padding-left: 0;
    padding-right: 0;
    text-align: center;
}

th.check,
td.check {
    padding: 0 0 0 16px;
}

td.protocol {
    font-size: 14px;
}

th.row-actions {
    padding-left: 0;
    padding-right: 18px;
    text-align: center;
}

td.row-actions {
    padding: 0 20px 0 0;
    text-align: right;
}

td svg,
td button,
th input,
td input {
    display: block;
}

input[type="checkbox"] {
    appearance: none;
    width: 25px;
    height: 25px;
    margin: 0;
    border: 2px solid #757575;
    border-radius: 3px;
    position: relative;
}

input[type="checkbox"]:checked {
    border-color: #23a1e1;
    background-color: #23a1e1;
}

input[type="checkbox"]:checked::after {
    content: "";
    position: absolute;
    left: 6px;
    top: -1px;
    width: 8px;
    height: 17px;
    border: solid #fff;
    border-width: 0 2px 2px 0;
    transform: rotate(45deg);
}

input.partial::after {
    content: "";
    position: absolute;
    left: 3px;
    top: 10px;
    width: 15px;
    height: 2px;
    background-color: #424242;
}

.sort {
    width: 18px;
    height: 16px;
    vertical-align: -3px;
}

.avatar {
    width: 44px;
    height: 44px;
}

.mark {
    width: 24px;
    height: 24px;
    margin: 0 auto;
}

.badge,
.count,
.tag {
    display: inline-block;
    border-radius: 4px;
    color: #fff;
    font-size: 14px;
    font-weight: 500;
    white-space: nowrap;
}

.badge {
    padding: 0 3px;
    line-height: 27px;
}

.badge.pending {
    background-color: #4a148c;
}

.badge.waiting {
    background-color: #dd2c00;
}

.count {
    padding: 0 9px;
    line-height: 29px;
    font-weight: 700;
    background-color: #dbb8b2;
}

.tag {
    padding: 0 10px;
    line-height: 26px;
    font-weight: 700;
}

.tag.red {
    background-color: #f44336;
}

.tag.green,
.count.green {
    background-color: #4caf50;
}

td button {
    width: 110px;
    height: 45px;
    margin-left: auto;
    border-radius: 4px;
    background-color: #fafafa;
    color: #212121;
    font-size: 18px;
    box-shadow: 0 2px 5px rgba(0, 0, 0, 0.26);
}

/* Scrollbar */
.scrollbar {
    flex: none;
    width: 19px;
    display: flex;
    flex-direction: column;
    align-items: center;
    border-left: 2px solid #f9f9f9;
    background-color: #f1f1f1;
}

.thumb {
    width: 100%;
    height: 179px;
    margin-bottom: auto;
    background-color: #c1c1c1;
}

.arrow {
    display: flex;
    align-items: center;
    justify-content: center;
    height: 21px;
}

.arrow::before {
    content: "";
    border: 5px solid transparent;
}

.up::before {
    border-top: none;
    border-bottom-color: #a3a3a3;
}

.down::before {
    border-bottom: none;
    border-top-color: #505050;
}
```
